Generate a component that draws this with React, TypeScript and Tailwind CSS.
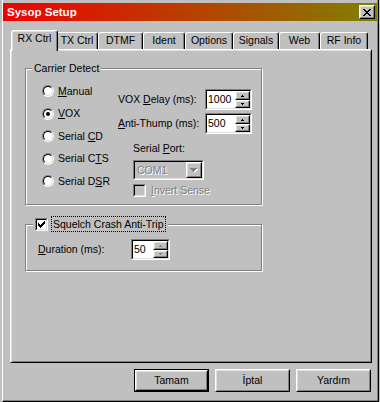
import type { ReactNode } from 'react'

const UP = ['.X.', 'XXX']
const DOWN = ['XXX', '.X.']
const COMBO_DOWN = ['XXXXXXX', '.XXXXX.', '..XXX..', '...X...']
const CLOSE_X = ['XX....XX', '.XX..XX.', '..XXXX..', '...XX...', '..XXXX..', '.XX..XX.', 'XX....XX']
const CHECK = ['......X', '.....XX', 'X...XXX', 'XX.XXX.', 'XXXXX..', '.XXX...', '..X....']

function Glyph({ rows, color = '#000', shadow }: { rows: string[]; color?: string; shadow?: string }) {
  const pts: [number, number][] = []
  rows.forEach((r, y) => [...r].forEach((c, x) => c === 'X' && pts.push([x, y])))
  const pad = shadow ? 1 : 0
  return (
    <svg width={rows[0].length + pad} height={rows.length + pad} shapeRendering="crispEdges" className="block">
      {shadow && pts.map(([x, y]) => <rect key={'s' + x + '-' + y} x={x + 1} y={y + 1} width={1} height={1} fill={shadow} />)}
      {pts.map(([x, y]) => <rect key={x + '-' + y} x={x} y={y} width={1} height={1} fill={color} />)}
    </svg>
  )
}

function Raised({ className = '', children }: { className?: string; children?: ReactNode }) {
  return (
    <div className={`border border-t-white border-l-white border-r-black border-b-black ${className}`}>
      <div className="h-full w-full border border-t-[#dfdfdf] border-l-[#dfdfdf] border-r-[#808080] border-b-[#808080] bg-[#c0c0c0] flex items-center justify-center">
        {children}
      </div>
    </div>
  )
}

function Sunken({ className = '', inner = '', children }: { className?: string; inner?: string; children?: ReactNode }) {
  return (
    <div className={`border border-t-[#808080] border-l-[#808080] border-b-white border-r-white ${className}`}>
      <div className={`h-full w-full border border-t-black border-l-black border-b-[#dfdfdf] border-r-[#dfdfdf] ${inner}`}>
        {children}
      </div>
    </div>
  )
}

function Radio({ checked }: { checked?: boolean }) {
  return (
    <span className="w-[12px] h-[12px] rounded-full border border-t-[#808080] border-l-[#808080] border-b-white border-r-white flex shrink-0">
      <span className="flex-1 rounded-full border border-t-black border-l-black border-b-[#dfdfdf] border-r-[#dfdfdf] bg-white flex items-center justify-center">
        {checked && <span className="w-[4px] h-[4px] rounded-full bg-black" />}
      </span>
    </span>
  )
}

function Checkbox({ checked, disabled }: { checked?: boolean; disabled?: boolean }) {
  return (
    <Sunken
      className="w-[13px] h-[13px] shrink-0"
      inner={`flex items-center justify-center ${disabled ? 'bg-[#c0c0c0]' : 'bg-white'}`}
    >
      {checked && <Glyph rows={CHECK} />}
    </Sunken>
  )
}

function Spinner({ value, className, dim }: { value: string; className: string; dim?: boolean }) {
  const arrow = dim ? '#808080' : '#000'
  return (
    <Sunken className={`h-[21px] ${className}`} inner="flex bg-white">
      <div className="flex-1 pl-[1px] leading-[17px]">{value}</div>
      <div className="w-[15px] flex flex-col">
        <Raised className="h-[9px]">
          <Glyph rows={UP} color={arrow} />
        </Raised>
        <Raised className="h-[8px]">
          <Glyph rows={DOWN} color={arrow} />
        </Raised>
      </div>
    </Sunken>
  )
}

function RadioRow({ checked, children }: { checked?: boolean; children: ReactNode }) {
  return (
    <div className="h-[22.5px] flex items-center gap-[4px]">
      <Radio checked={checked} />
      <span>{children}</span>
    </div>
  )
}

const tabs: [string, string][] = [
  ['RX Ctrl', 'w-[47px]'],
  ['TX Ctrl', 'w-[42px]'],
  ['DTMF', 'w-[45px]'],
  ['Ident', 'w-[42px]'],
  ['Options', 'w-[48px]'],
  ['Signals', 'w-[46px]'],
  ['Web', 'w-[41px]'],
  ['RF Info', 'w-[48px]'],
]

const disabledText = 'text-[#808080] [text-shadow:1px_1px_0_#fff]'

export default function App() {
  return (
    <div className="w-[380px] h-[402px] bg-[#c0c0c0] pl-[2px] font-['Liberation_Sans',Arial,sans-serif] text-[10.5px] leading-[13px] text-black">
      <div className="w-[377px] h-[402px] border-l border-r border-b border-l-white border-r-black border-b-black shadow-[inset_-1px_-1px_0_#808080] pt-[3px]">
        <div className="h-[18px] w-[374px] bg-[linear-gradient(to_right,#f00000,#808000)] flex items-center justify-between pl-[4px] pr-[2px]">
          <span className="text-white font-bold text-[11.5px]">Sysop Setup</span>
          <Raised className="w-[16px] h-[14px]">
            <Glyph rows={CLOSE_X} />
          </Raised>
        </div>

        <div className="pl-[7px]">
          <div className="flex items-end mt-[9px] pl-[3px]">
            {tabs.map(([label, w], i) =>
              i === 0 ? (
                <div
                  key={label}
                  className={`${w} relative z-10 -mx-[2px] h-[21px] -mb-[2px] border-l border-t border-r border-l-white border-t-white border-r-black rounded-t-[3px] shadow-[inset_-1px_0_0_#808080,inset_1px_1px_0_#dfdfdf] bg-[#c0c0c0] pt-[1px] text-center`}
                >
                  {label}
                </div>
              ) : (
                <div
                  key={label}
                  className={`${w} h-[17px] border-l border-t border-r border-l-white border-t-white border-r-black rounded-t-[3px] shadow-[inset_-1px_0_0_#808080] pt-[1px] text-center`}
                >
                  {label}
                </div>
              ),
            )}
          </div>

          <div className="w-[362px] h-[314px] border border-t-white border-l-white border-r-black border-b-black shadow-[inset_1px_1px_0_#dfdfdf,inset_-1px_-1px_0_#808080] pl-[14px] pt-[18px]">
            <div className="w-[237px] h-[137px] border border-[#808080] shadow-[inset_1px_1px_0_#fff,1px_1px_0_#fff]">
              <div className="-mt-[7px] ml-[6px] px-[2px] w-fit bg-[#c0c0c0]">Carrier Detect</div>
              <div className="flex">
                <div className="w-[92px] pl-[16px] pt-[5px]">
                  <RadioRow>
                    <u>M</u>anual
                  </RadioRow>
                  <RadioRow checked>
                    <u>V</u>OX
                  </RadioRow>
                  <RadioRow>
                    Serial <u>C</u>D
                  </RadioRow>
                  <RadioRow>
                    Serial C<u>T</u>S
                  </RadioRow>
                  <RadioRow>
                    Serial D<u>S</u>R
                  </RadioRow>
                </div>
                <div className="pt-[14px]">
                  <div className="flex items-center h-[21px]">
                    <span className="w-[87px]">
                      VOX <u>D</u>elay (ms):
                    </span>
                    <Spinner value="1000" className="w-[47px]" />
                  </div>
                  <div className="flex items-center h-[21px] mt-[3px]">
                    <span className="w-[87px]">
                      <u>A</u>nti-Thump (ms):
                    </span>
                    <Spinner value="500" className="w-[47px]" />
                  </div>
                  <div className="pl-[15px] mt-[8px]">
                    <div>
                      Serial <u>P</u>ort:
                    </div>
                    <Sunken className="w-[71px] h-[20px] mt-[5px]" inner="flex bg-[#c0c0c0]">
                      <div className={`flex-1 pl-[2px] leading-[16px] ${disabledText}`}>COM1</div>
                      <Raised className="w-[16px] h-[16px]">
                        <Glyph rows={COMBO_DOWN} color="#808080" shadow="#fff" />
                      </Raised>
                    </Sunken>
                    <div className="flex items-center gap-[5px] mt-[4px] h-[13px]">
                      <Checkbox disabled />
                      <span className={disabledText}>
                        <u>I</u>nvert Sense
                      </span>
                    </div>
                  </div>
                </div>
              </div>
            </div>

            <div className="w-[237px] h-[47px] mt-[19px] border border-[#808080] shadow-[inset_1px_1px_0_#fff,1px_1px_0_#fff]">
              <div className="-mt-[9px] ml-[7px] px-[2px] w-fit h-[16px] bg-[#c0c0c0] flex items-center gap-[3px]">
                <Checkbox checked />
                <span className="h-[16px] border border-dotted border-black px-[1px] leading-[14px]">
                  Squelch Crash Anti-Trip
                </span>
              </div>
              <div className="flex items-center pl-[12px] mt-[7px]">
                <span className="w-[93px]">
                  <u>D</u>uration (ms):
                </span>
                <Spinner value="50" className="w-[39px]" dim />
              </div>
            </div>
          </div>

          <div className="flex justify-end gap-[6px] w-[362px] pr-[1px] mt-[6px]">
            <div className="w-[75px] h-[23px] border border-black">
              <Raised className="h-full">Tamam</Raised>
            </div>
            <Raised className="w-[75px] h-[23px]">İptal</Raised>
            <Raised className="w-[75px] h-[23px]">Yardım</Raised>
          </div>
        </div>
      </div>
    </div>
  )
}
